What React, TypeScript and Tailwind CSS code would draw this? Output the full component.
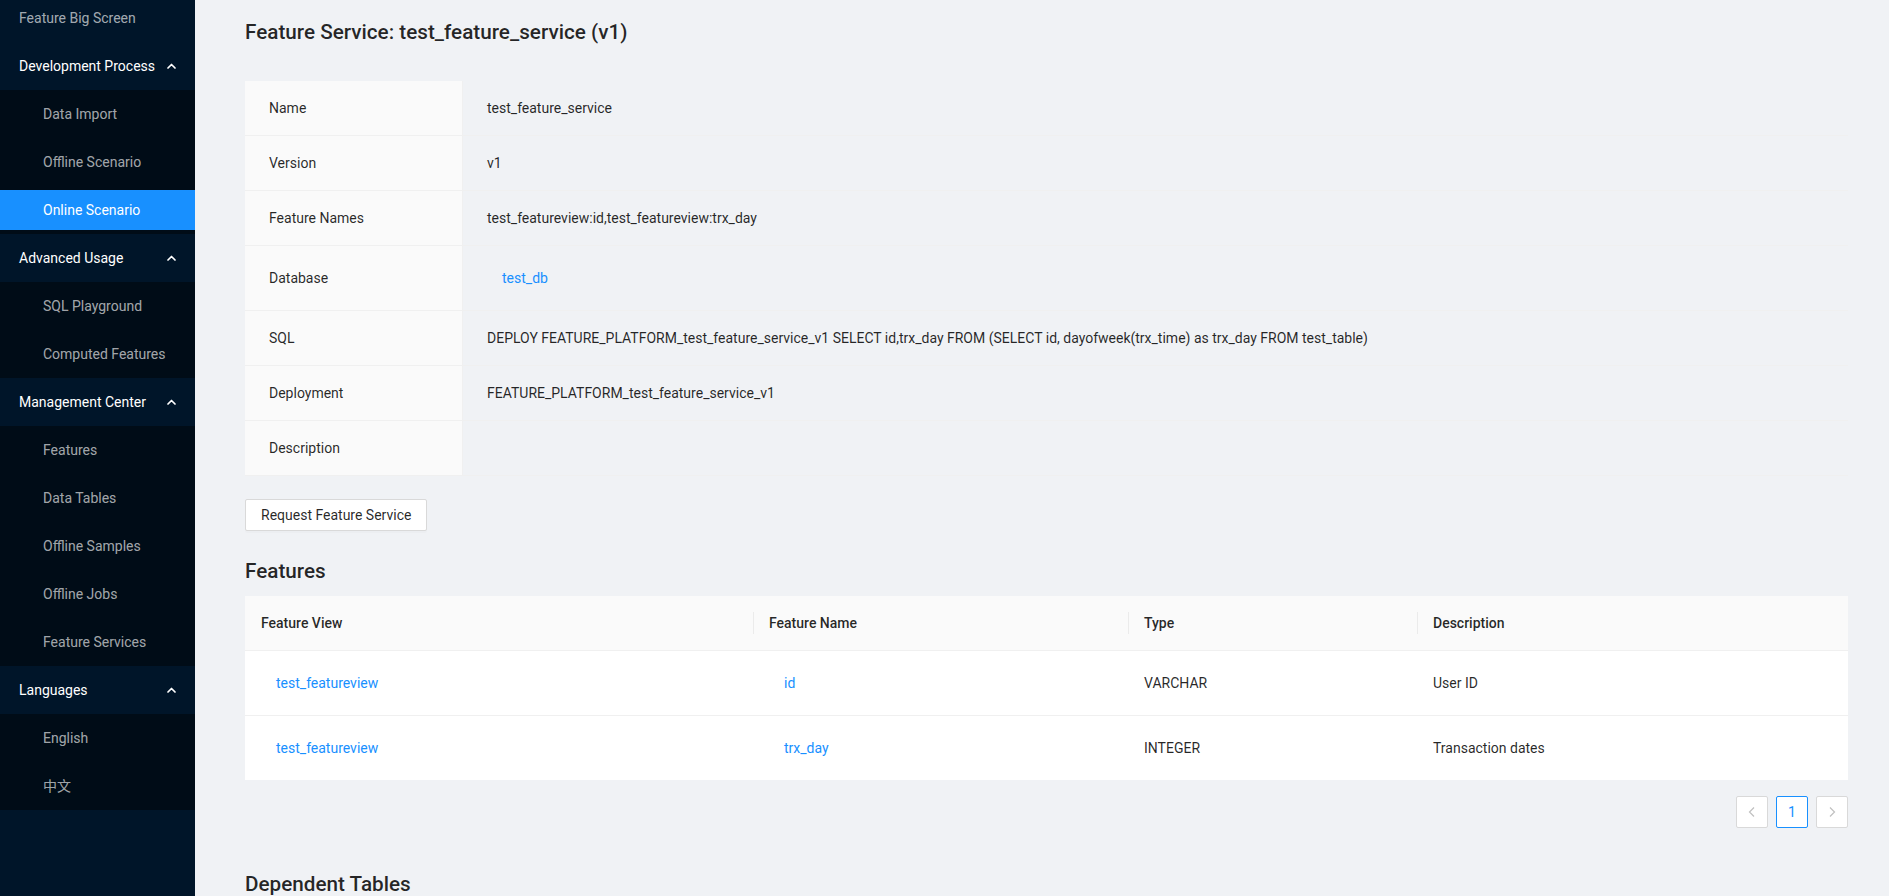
import React from "react";

const ChevronUp = () => (
  <svg width="9" height="6" viewBox="0 0 9 6" fill="none">
    <path d="M1 5 L4.5 1.5 L8 5" stroke="currentColor" strokeWidth="1.7" strokeLinecap="round" strokeLinejoin="round" />
  </svg>
);

type SubItem = { label: string; selected?: boolean };
type Group = { title: string; items: SubItem[] };

const groups: Group[] = [
  {
    title: "Development Process",
    items: [{ label: "Data Import" }, { label: "Offline Scenario" }, { label: "Online Scenario", selected: true }],
  },
  { title: "Advanced Usage", items: [{ label: "SQL Playground" }, { label: "Computed Features" }] },
  {
    title: "Management Center",
    items: [
      { label: "Features" },
      { label: "Data Tables" },
      { label: "Offline Samples" },
      { label: "Offline Jobs" },
      { label: "Feature Services" },
    ],
  },
  { title: "Languages", items: [{ label: "English" }, { label: "中文" }] },
];

function Sidebar() {
  return (
    <aside className="w-[195px] shrink-0 h-full bg-[#001529] overflow-hidden text-[14px]">
      <div className="h-[42px] pb-[6px] flex items-center pl-[19px] text-[rgba(255,255,255,0.65)]">Feature Big Screen</div>
      {groups.map((g) => (
        <div key={g.title}>
          <div className="py-[4px]">
            <div className="h-[40px] flex items-center justify-between pl-[19px] pr-[19px] text-white">
              <span>{g.title}</span>
              <ChevronUp />
            </div>
          </div>
          <div className="bg-[#000c17] py-[4px] flex flex-col gap-[8px]">
            {g.items.map((it) => (
              <div
                key={it.label}
                className={
                  it.selected
                    ? "h-[40px] flex items-center pl-[43px] bg-[#1890ff] text-white"
                    : "h-[40px] flex items-center pl-[43px] text-[rgba(255,255,255,0.65)]"
                }
              >
                {it.label}
              </div>
            ))}
          </div>
        </div>
      ))}
    </aside>
  );
}

const descRows: { label: string; value: React.ReactNode; link?: boolean }[] = [
  { label: "Name", value: "test_feature_service" },
  { label: "Version", value: "v1" },
  { label: "Feature Names", value: "test_featureview:id,test_featureview:trx_day" },
  { label: "Database", value: "test_db", link: true },
  {
    label: "SQL",
    value:
      "DEPLOY FEATURE_PLATFORM_test_feature_service_v1 SELECT id,trx_day FROM (SELECT id, dayofweek(trx_time) as trx_day FROM test_table)",
  },
  { label: "Deployment", value: "FEATURE_PLATFORM_test_feature_service_v1" },
  { label: "Description", value: "" },
];

const features = [
  { view: "test_featureview", name: "id", type: "VARCHAR", desc: "User ID" },
  { view: "test_featureview", name: "trx_day", type: "INTEGER", desc: "Transaction dates" },
];

function HeaderCell({ label, divider }: { label: string; divider?: boolean }) {
  return (
    <div className="flex items-center h-[54px]">
      {divider ? <span className="h-[22px] w-px bg-[rgba(0,0,0,0.06)]" /> : null}
      <span className={divider ? "pl-[15px]" : "pl-[16px]"}>{label}</span>
    </div>
  );
}

export default function App() {
  return (
    <div className="flex w-full h-[896px] overflow-hidden font-['Roboto','Liberation_Sans','Noto_Sans_CJK_SC',sans-serif] text-[14px] leading-[22px]">
      <Sidebar />
      <main className="flex-1 h-full overflow-hidden bg-[#f0f2f5] pl-[50px] pr-[41px] text-[rgba(0,0,0,0.85)]">
        <h2 className="pt-[18px] h-[46px] text-[20.7px] leading-[28px] font-medium text-[rgba(0,0,0,0.85)]">
          Feature Service: test_feature_service (v1)
        </h2>
        <div className="mt-[35px]">
          {descRows.map((r) => (
            <div key={r.label} className="flex border-b border-[#f0f0f0]">
              <div className="w-[218px] shrink-0 bg-[#fafafa] border-r border-[#f0f0f0] px-[24px] flex items-center">
                <span className="py-[16px]">{r.label}</span>
              </div>
              <div className="flex-1 px-[24px] flex items-center min-h-[54px]">
                {r.link ? (
                  <span className="h-[32px] my-[16px] px-[15px] flex items-center text-[#1890ff]">{r.value}</span>
                ) : (
                  <span className="py-[16px]">{r.value}</span>
                )}
              </div>
            </div>
          ))}
        </div>
        <button className="mt-[23px] h-[32px] px-[15px] bg-white border border-[#d9d9d9] rounded-[2px] shadow-[0_2px_0_rgba(0,0,0,0.015)] text-[rgba(0,0,0,0.85)]">
          Request Feature Service
        </button>
        <h3 className="mt-[26px] h-[28px] text-[20.7px] leading-[28px] font-medium">Features</h3>
        <div className="mt-[11px] bg-white">
          <div className="grid grid-cols-[508px_375px_289px_1fr] bg-[#fafafa] border-b border-[#f0f0f0] font-medium">
            <HeaderCell label="Feature View" />
            <HeaderCell label="Feature Name" divider />
            <HeaderCell label="Type" divider />
            <HeaderCell label="Description" divider />
          </div>
          {features.map((f, i) => (
            <div
              key={i}
              className={
                i < features.length - 1
                  ? "grid grid-cols-[508px_375px_289px_1fr] border-b border-[#f0f0f0]"
                  : "grid grid-cols-[508px_375px_289px_1fr]"
              }
            >
              <div className="h-[64px] flex items-center pl-[31px] text-[#1890ff]">{f.view}</div>
              <div className="h-[64px] flex items-center pl-[31px] text-[#1890ff]">{f.name}</div>
              <div className="h-[64px] flex items-center pl-[16px]">{f.type}</div>
              <div className="h-[64px] flex items-center pl-[16px]">{f.desc}</div>
            </div>
          ))}
        </div>
        <div className="mt-[16px] flex justify-end gap-[8px]">
          <div className="w-[32px] h-[32px] bg-white border border-[#d9d9d9] rounded-[2px] flex items-center justify-center text-[rgba(0,0,0,0.25)]">
            <svg width="10" height="12" viewBox="0 0 10 12" fill="none">
              <path d="M7 1.5 L2.5 6 L7 10.5" stroke="currentColor" strokeWidth="1.2" />
            </svg>
          </div>
          <div className="w-[32px] h-[32px] bg-white border border-[#1890ff] rounded-[2px] flex items-center justify-center text-[#1890ff]">
            1
          </div>
          <div className="w-[32px] h-[32px] bg-white border border-[#d9d9d9] rounded-[2px] flex items-center justify-center text-[rgba(0,0,0,0.25)]">
            <svg width="10" height="12" viewBox="0 0 10 12" fill="none">
              <path d="M3 1.5 L7.5 6 L3 10.5" stroke="currentColor" strokeWidth="1.2" />
            </svg>
          </div>
        </div>
        <h3 className="mt-[42px] h-[28px] text-[20.7px] leading-[28px] font-medium">Dependent Tables</h3>
      </main>
    </div>
  );
}
